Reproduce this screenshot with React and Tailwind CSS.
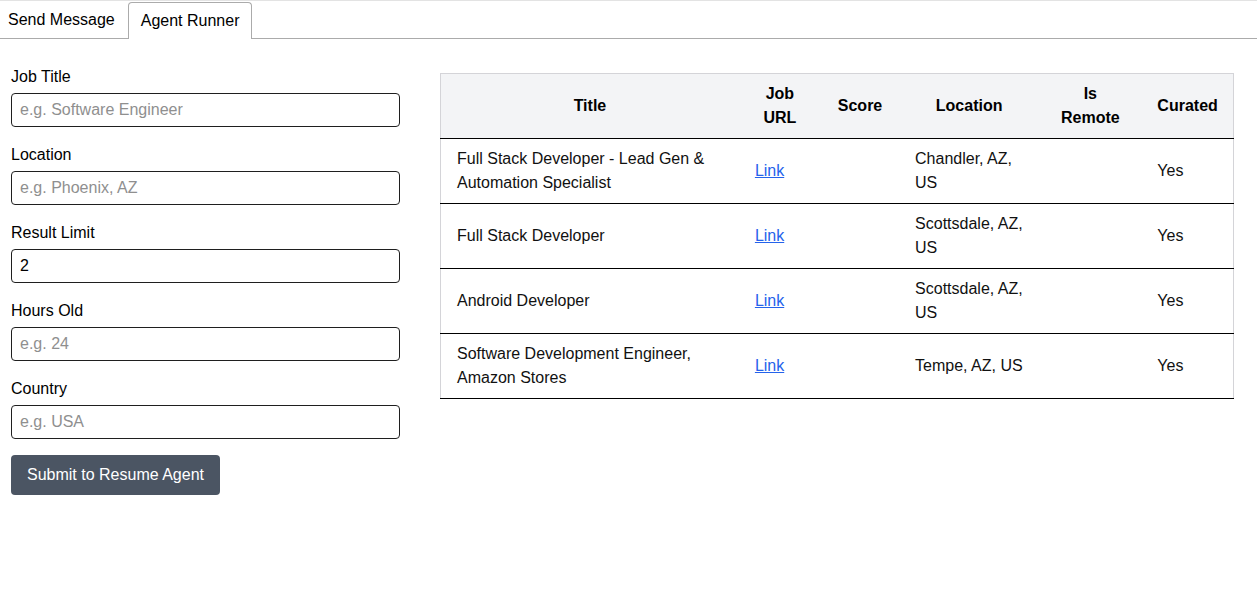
import { useState } from "react";

const jobs = [
    { title: "Full Stack Developer - Lead Gen & Automation Specialist", location: "Chandler, AZ, US", curated: "Yes" },
    { title: "Full Stack Developer", location: "Scottsdale, AZ, US", curated: "Yes" },
    { title: "Android Developer", location: "Scottsdale, AZ, US", curated: "Yes" },
    { title: "Software Development Engineer, Amazon Stores", location: "Tempe, AZ, US", curated: "Yes" },
];

const fields = [
    { label: "Job Title", placeholder: "e.g. Software Engineer", value: "" },
    { label: "Location", placeholder: "e.g. Phoenix, AZ", value: "" },
    { label: "Result Limit", placeholder: "", value: "2" },
    { label: "Hours Old", placeholder: "e.g. 24", value: "" },
    { label: "Country", placeholder: "e.g. USA", value: "" },
];

export default function App() {
    const [tab, setTab] = useState("runner");

    return (
        <div className="min-h-screen bg-white text-black font-['Liberation_Sans',Arial,sans-serif] text-[16px]">
            {/* Tabs */}
            <div className="flex border-t border-b border-t-[#e3e3e3] border-b-[#ababab] pt-px h-[39px]">
                <button
                    onClick={() => setTab("send")}
                    className="pl-2 pr-[13px] h-[36px] leading-[20px] text-black"
                >
                    Send Message
                </button>
                <button
                    onClick={() => setTab("runner")}
                    className="relative -mb-px h-[37px] px-3 leading-[20px] bg-white border border-b-0 border-[#ababab] rounded-t-[4px] text-black"
                >
                    Agent Runner
                </button>
            </div>

            <div className="flex pt-[28px] pl-[11px]">
                {/* Form */}
                <div className="w-[389px] flex flex-col">
                    {fields.map((f) => (
                        <div key={f.label} className="flex flex-col mb-[18px]">
                            <label className="pt-px leading-[18px] mb-[7px]">{f.label}</label>
                            <input
                                defaultValue={f.value}
                                placeholder={f.placeholder}
                                className="h-[34px] px-2 border border-[#1f1f1f] rounded-[4px] outline-none placeholder:text-[#8f8f8f] text-black"
                            />
                        </div>
                    ))}
                    <button className="-mt-[2px] self-start h-[40px] px-4 bg-[#4b5563] text-white rounded-[4px]">
                        Submit to Resume Agent
                    </button>
                </div>

                {/* Results */}
                <table className="ml-[40px] mt-[6px] w-[794px] table-fixed border-collapse self-start border-x border-t border-[#d4d4d8] leading-6">
                    <colgroup>
                        <col className="w-[298px]" />
                        <col className="w-[82px]" />
                        <col className="w-[78px]" />
                        <col className="w-[140px]" />
                        <col className="w-[102px]" />
                        <col className="w-[92px]" />
                    </colgroup>
                    <thead>
                        <tr className="bg-[#f3f4f6] border-b border-black">
                            <th className="px-4 py-2 h-[64px] font-bold">Title</th>
                            <th className="px-4 py-2 font-bold">Job URL</th>
                            <th className="px-4 py-2 font-bold">Score</th>
                            <th className="px-4 py-2 font-bold">Location</th>
                            <th className="px-4 py-2 font-bold">Is Remote</th>
                            <th className="px-4 py-2 font-bold">Curated</th>
                        </tr>
                    </thead>
                    <tbody>
                        {jobs.map((j) => (
                            <tr key={j.title} className="border-b border-black">
                                <td className="px-4 py-2 h-[64px] text-[#111]">{j.title}</td>
                                <td className="px-4 py-2">
                                    <a href="#" className="text-[#2563eb] underline">Link</a>
                                </td>
                                <td className="px-4 py-2"></td>
                                <td className="px-4 py-2 text-[#111]">{j.location}</td>
                                <td className="px-4 py-2"></td>
                                <td className="px-4 py-2 text-[#111]">{j.curated}</td>
                            </tr>
                        ))}
                    </tbody>
                </table>
            </div>
        </div>
    );
}
